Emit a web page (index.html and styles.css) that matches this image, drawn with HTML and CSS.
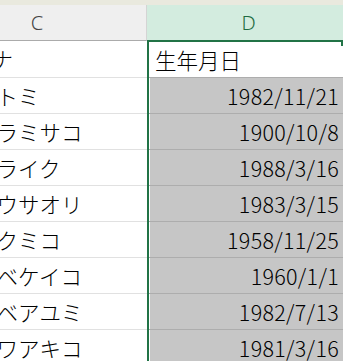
FILE: index.html
```html
<!DOCTYPE html>
<html lang="ja">
<head>
<meta charset="utf-8">
<link rel="stylesheet" href="styles.css">
</head>
<body>
<div class="topstrip"></div>
<div class="sheet">
  <div class="col col-c">
    <div class="hdr hdr-c">C</div>
    <div class="cell c first"><span class="kana k-first">ナ</span></div>
    <div class="cell c"><span class="kana">トミ</span></div>
    <div class="cell c"><span class="kana">ラミサコ</span></div>
    <div class="cell c"><span class="kana">ライク</span></div>
    <div class="cell c"><span class="kana">ウサオリ</span></div>
    <div class="cell c"><span class="kana">クミコ</span></div>
    <div class="cell c"><span class="kana">ベケイコ</span></div>
    <div class="cell c"><span class="kana">ベアユミ</span></div>
    <div class="cell c"><span class="kana">ワアキコ</span></div>
  </div>
  <div class="col col-d">
    <div class="hdr hdr-d">D</div>
    <div class="dbody">
      <div class="cell d active">生年月日<span class="notch"></span></div>
      <div class="cell d sel">1982/11/21</div>
      <div class="cell d sel">1900/10/8</div>
      <div class="cell d sel">1988/3/16</div>
      <div class="cell d sel">1983/3/15</div>
      <div class="cell d sel">1958/11/25</div>
      <div class="cell d sel">1960/1/1</div>
      <div class="cell d sel">1982/7/13</div>
      <div class="cell d sel">1981/3/16</div>
    </div>
  </div>
</div>
</body>
</html>
```

FILE: styles.css
```css
* { box-sizing: border-box; }
html, body {
  margin: 0;
  padding: 0;
  width: 343px;
  height: 361px;
  overflow: hidden;
  background: #ffffff;
  font-family: "Noto Sans CJK JP", "Noto Sans", sans-serif;
  color: #000;
}
.topstrip {
  height: 5px;
  background: #e9e9de;
}
.sheet {
  display: flex;
  align-items: flex-start;
}
.col { display: flex; flex-direction: column; }
.col-c {
  width: 219px;
  margin-left: -72px;
  flex: none;
}
.col-d {
  width: 196px;
  flex: none;
}
.hdr {
  height: 35px;
  display: flex;
  align-items: center;
  justify-content: center;
  font-family: "Noto Sans", "Liberation Sans", sans-serif;
  font-size: 20px;
  font-weight: 300;
}
.hdr-c {
  background: #efefef;
  color: #444444;
  height: 36px;
  border-bottom: 1px solid #ababab;
  border-right: 1px solid #d4d4d4;
}
.hdr-d {
  background: #d3ecdf;
  color: #1e6b42;
  padding-left: 7px;
}
.cell {
  height: 36px;
  display: flex;
  align-items: center;
  font-size: 21.5px;
  font-weight: 300;
  line-height: 1;
  white-space: nowrap;
  overflow: hidden;
}
.cell.c {
  border-bottom: 1px solid #e1e1e1;
  padding-left: 68.5px;
}
.cell.c.first { height: 37px; }
.k-first { margin-left: -5px; }
.dbody {
  border-left: 2px solid #217346;
  border-top: 2px solid #217346;
}
.cell.d {
  border-bottom: 1px solid #adadad;
  position: relative;
  overflow: visible;
}
.cell.d.active {
  height: 36px;
  background: #ffffff;
  padding-left: 6px;
}
.cell.d.sel {
  background: #c6c6c6;
  justify-content: flex-end;
  padding-right: 4px;
  letter-spacing: 0.3px;
  box-shadow: inset 1px 0 0 #ffffff;
}
.notch {
  position: absolute;
  right: 0;
  top: -2px;
  width: 2px;
  height: 6px;
  background: #217346;
}
```
